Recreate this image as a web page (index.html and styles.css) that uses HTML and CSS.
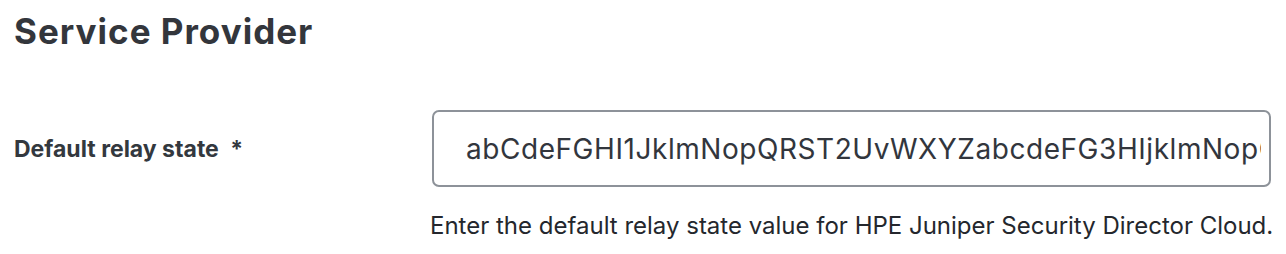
FILE: index.html
```html
<!DOCTYPE html>
<html>
<head>
<meta charset="utf-8">
<link rel="stylesheet" href="styles.css">
</head>
<body>
<div class="page">
  <h1 class="title">Service Provider</h1>
  <div class="field">
    <label class="label" for="relay">Default relay state <span class="req">*</span></label>
    <div class="control">
      <input id="relay" class="input" type="text" value="abCdeFGHI1JklmNopQRST2UvWXYZabcdeFG3HIjklmNopQRST">
      <div class="help">Enter the default relay state value for HPE Juniper Security Director Cloud.</div>
    </div>
  </div>
</div>
</body>
</html>
```
FILE: styles.css
```css
html, body {
  margin: 0;
  padding: 0;
  background: #ffffff;
}
.page {
  padding: 8px 15px 0 14px;
  font-family: Inter, "Liberation Sans", sans-serif;
  color: #32363d;
}
.title {
  margin: 0;
  font-size: 35px;
  font-weight: 700;
  line-height: 46px;
  letter-spacing: 1px;
  color: #33363c;
}
.field {
  display: flex;
  margin-top: 56px;
}
.label {
  width: 418px;
  flex: none;
  font-size: 23px;
  font-weight: 700;
  color: #33383e;
  padding-top: 25px;
  line-height: 28px;
}
.req {
  margin-left: 6px;
}
.control {
  flex: 1;
  display: flex;
  flex-direction: column;
  min-width: 0;
}
.input {
  box-sizing: border-box;
  width: 839px;
  height: 77px;
  border: 2px solid #8d9299;
  border-radius: 7px;
  padding: 0 8px 0 32px;
  font-family: Inter, "Liberation Sans", sans-serif;
  font-size: 28px;
  letter-spacing: 0.55px;
  color: #32363d;
  outline: none;
  background: #fff;
}
.help {
  margin-top: 25px;
  margin-left: -2px;
  font-size: 24px;
  line-height: 28px;
  white-space: nowrap;
  color: #24272d;
}
```
